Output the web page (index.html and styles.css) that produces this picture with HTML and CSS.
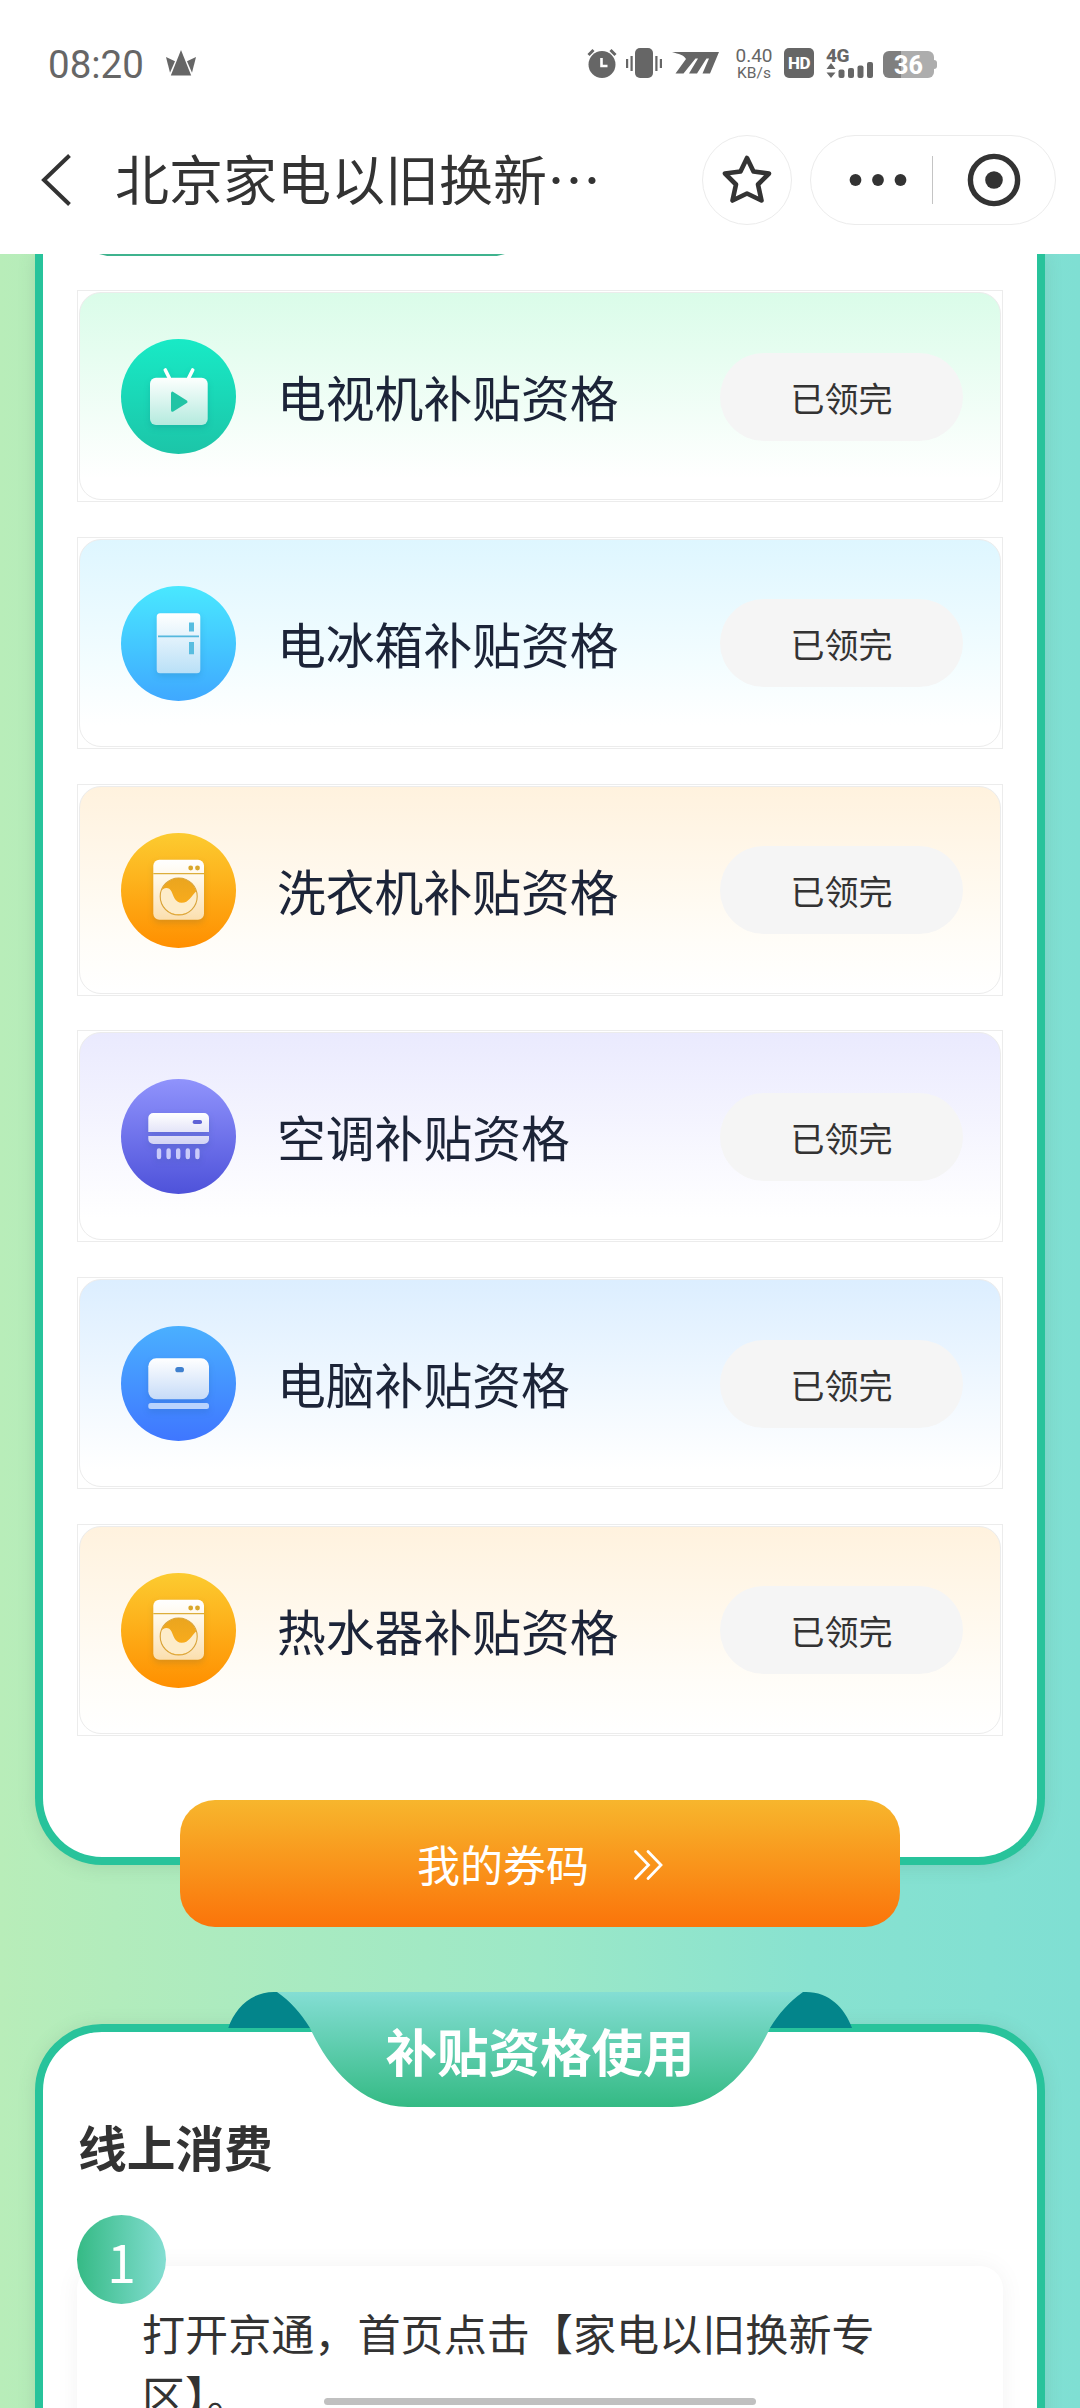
FILE: index.html
```html
<!DOCTYPE html>
<html lang="zh-CN">
<head>
<meta charset="utf-8">
<title>北京家电以旧换新</title>
<link rel="stylesheet" href="styles.css">
</head>
<body>
<svg class="defs" width="0" height="0">
  <defs>
    <linearGradient id="gTv" x1="0" y1="0" x2="0" y2="1"><stop offset="0" stop-color="#fdfffe"/><stop offset="1" stop-color="#b4eade"/></linearGradient>
    <linearGradient id="gFridge" x1="0" y1="0" x2="0" y2="1"><stop offset="0" stop-color="#ffffff"/><stop offset="1" stop-color="#b9e0f7"/></linearGradient>
    <linearGradient id="gWash" x1="0" y1="0" x2="0" y2="1"><stop offset="0" stop-color="#ffffff"/><stop offset=".3" stop-color="#fff8ea"/><stop offset="1" stop-color="#fbdfae"/></linearGradient>
    <linearGradient id="gHole" x1="0" y1="0" x2="0" y2="1"><stop offset="0" stop-color="#eaa51f"/><stop offset="1" stop-color="#ffae1a"/></linearGradient>
    <linearGradient id="gAc" x1="0" y1="0" x2="0" y2="1"><stop offset="0" stop-color="#ffffff"/><stop offset="1" stop-color="#d2d3f4"/></linearGradient>
    <linearGradient id="gPc" x1="0" y1="0" x2="0" y2="1"><stop offset="0" stop-color="#ffffff"/><stop offset="1" stop-color="#c6dbf8"/></linearGradient>
    <linearGradient id="gBanner" x1="0" y1="0" x2="0" y2="1"><stop offset="0" stop-color="#84ded4"/><stop offset="1" stop-color="#34ba84"/></linearGradient>
    <symbol id="washer" viewBox="0 0 115 115">
      <rect x="32.3" y="26.7" width="50.7" height="60" rx="6" fill="url(#gWash)"/>
      <path d="M32.3 40.6h50.7" stroke="#dcae3c" stroke-width="1.2"/>
      <circle cx="69.7" cy="35" r="2.4" fill="#d9a72b"/><circle cx="76.5" cy="35" r="2.4" fill="#d9a72b"/>
      <circle cx="57.7" cy="63.5" r="18.4" fill="url(#gHole)"/>
      <path d="M39.8 58.5C42 54.5 48 53 50.500 58.5C52.500 63 54 69.500 60.500 69.800C68 70 70 63 75.5 58C80 70 71 81.3 57.7 81.3C45 81.3 37.5 70 39.8 58.5Z" fill="#fdecc9"/>
      <circle cx="57.7" cy="63.5" r="18.5" fill="none" stroke="#d9a43a" stroke-width="1.1"/>
    </symbol>
  </defs>
</svg>

<header class="top">
  <div class="status">
    <span class="clock">08:20</span>
    <svg class="crown" width="30" height="26" viewBox="0 0 30 26" fill="#666"><path d="M15 0l10.200 25.500h-20.400z"/><path d="M0 7l9 4.200-5 11.500z"/><path d="M30 7l-9 4.200 5 11.500z"/></svg>
    <svg class="alarm" width="30" height="30" viewBox="0 0 30 30"><circle cx="15" cy="16.500" r="13.500" fill="#666"/><path d="M1.500 7l5-5M28.500 7l-5-5" stroke="#666" stroke-width="3"/><path d="M14.500 10v8h6" fill="none" stroke="#fff" stroke-width="2.600"/></svg>
    <svg class="vibrate" width="36" height="30" viewBox="0 0 36 30" fill="#666"><rect x="9" width="18" height="30" rx="5"/><rect x="4.500" y="8" width="2.200" height="15"/><rect y="11" width="2.200" height="9"/><rect x="29.300" y="8" width="2.200" height="15"/><rect x="33.800" y="11" width="2.200" height="9"/></svg>
    <svg class="brand" width="47" height="22" viewBox="0 0 47 22" fill="#666"><path d="M0 0H47L38 21.500H30.500L37 6.500H34.500L25 21.500H17L26 6.500H23.500L11.500 21.500H3.500L14 7C12 3 7 2 0 0Z"/></svg>
    <span class="rate"><span class="rate-num">0.40</span><span class="rate-unit">KB/s</span></span>
    <span class="hd">HD</span>
    <span class="cell">
      <span class="net">4G</span>
      <svg width="48" height="17" viewBox="0 0 48 17" fill="#666"><path d="M5 1l4.500 6h-9zM5 16l4.500-5.500h-9z"/><rect x="12.500" y="7.500" width="6" height="8.500" rx="2"/><rect x="22" y="6" width="6" height="10" rx="2"/><rect x="31.500" y="3.500" width="6" height="12.500" rx="2"/><rect x="41" y="0" width="6" height="16" rx="2"/></svg>
    </span>
    <span class="battery">36</span><span class="nub"></span>
  </div>
  <nav class="nav">
    <svg class="back" width="30" height="52" viewBox="0 0 30 52"><path d="M28.500 1.500L3 26L28.500 50.500" fill="none" stroke="#333" stroke-width="4"/></svg>
    <h1 class="title">北京家电以旧换新…</h1>
    <div class="fav"><svg width="52" height="52" viewBox="0 0 52 52"><path d="M26 4L32.500 17.500L48 19.500L37 30.500L40.500 46.500L26 39.500L11.500 46.500L15 30.500L4 19.500L19.500 17.500Z" fill="none" stroke="#333" stroke-width="4.600" stroke-linejoin="round"/></svg></div>
    <div class="capsule">
      <svg class="dots" width="58" height="14" viewBox="0 0 58 14" fill="#333"><circle cx="6.500" cy="7" r="5.900"/><circle cx="29" cy="7" r="5.900"/><circle cx="51.500" cy="7" r="5.900"/></svg>
      <span class="sep"></span>
      <svg class="target" width="54" height="54" viewBox="0 0 54 54"><circle cx="27" cy="27" r="23.600" fill="none" stroke="#333" stroke-width="5.400"/><circle cx="27" cy="27" r="8.800" fill="#333"/></svg>
    </div>
  </nav>
</header>

<main class="page">
  <section class="card quota">
    <div class="tab-edge"></div>
    <ul class="list">
      <li class="row"><div class="panel tv">
        <span class="badge"><svg width="115" height="115" viewBox="0 0 115 115"><path d="M44.300 31l4 8M71.700 31l-4 8" stroke="#fff" stroke-width="3.600" stroke-linecap="round"/><rect x="29" y="38.700" width="57.700" height="47.300" rx="6" fill="url(#gTv)"/><path d="M51.500 54.200v17l13.500-8.500z" fill="#22c4a5" stroke="#22c4a5" stroke-width="3" stroke-linejoin="round"/></svg></span>
        <span class="name">电视机补贴资格</span><span class="state">已领完</span></div></li>
      <li class="row"><div class="panel fridge">
        <span class="badge"><svg width="115" height="115" viewBox="0 0 115 115"><rect x="35.700" y="27.300" width="43.600" height="60" rx="3.500" fill="url(#gFridge)"/><path d="M37 50.300h41" stroke="#55b8dd" stroke-width="1.800"/><path d="M68 36.500h5v9h-5zM68 56h5v12.300h-5z" fill="#58bde0"/></svg></span>
        <span class="name">电冰箱补贴资格</span><span class="state">已领完</span></div></li>
      <li class="row"><div class="panel wash">
        <span class="badge"><svg width="115" height="115"><use href="#washer"/></svg></span>
        <span class="name">洗衣机补贴资格</span><span class="state">已领完</span></div></li>
      <li class="row"><div class="panel ac">
        <span class="badge"><svg width="115" height="115" viewBox="0 0 115 115"><path d="M27.300 53V39a5 5 0 0 1 5-5h50.700a5 5 0 0 1 5 5v14zM27.300 57h60.700v3a5 5 0 0 1-5 5H32.300a5 5 0 0 1-5-5z" fill="url(#gAc)"/><rect x="71.700" y="41" width="9.300" height="4" rx="1.800" fill="#5e62d6"/><path d="M38 71.500v6.500M47.600 71.500v6.500M57.200 71.500v6.500M66.800 71.500v6.500M76.400 71.500v6.500" stroke="#c9cbfa" stroke-width="4.400" stroke-linecap="round"/></svg></span>
        <span class="name">空调补贴资格</span><span class="state">已领完</span></div></li>
      <li class="row"><div class="panel pc">
        <span class="badge"><svg width="115" height="115" viewBox="0 0 115 115"><rect x="27.300" y="32.300" width="60.700" height="41" rx="8" fill="url(#gPc)"/><rect x="54.300" y="41" width="8.700" height="5.300" rx="2.650" fill="#3f80cf"/><rect x="27.300" y="77" width="60.700" height="6" rx="2.500" fill="#b9d3fd"/></svg></span>
        <span class="name">电脑补贴资格</span><span class="state">已领完</span></div></li>
      <li class="row"><div class="panel wash">
        <span class="badge"><svg width="115" height="115"><use href="#washer"/></svg></span>
        <span class="name">热水器补贴资格</span><span class="state">已领完</span></div></li>
    </ul>
  </section>

  <a class="coupons"><span class="coupons-text">我的券码</span><svg width="32" height="32" viewBox="0 0 32 32"><path d="M2.500 2.500L15.500 16L2.500 29.500M15 2.500L28 16L15 29.500" fill="none" stroke="#fff" stroke-width="2.800" stroke-linecap="round"/></svg></a>

  <section class="card usage">
    <div class="banner">
      <svg class="ribbon" width="624" height="115" viewBox="228 1992 624 115">
        <path d="M228.300 2028C235 2008 251 1992 274 1992H280L315 2028ZM852 2028C845 2008 829 1992 806 1992H800L765 2028Z" fill="#03858b"/>
        <path d="M277 1992H803C788 2003 780 2012 770 2028C754 2063 722 2107 672 2107H408C358 2107 326 2063 310 2028C300 2012 291 2002 277 1992Z" fill="url(#gBanner)"/>
      </svg>
      <h2 class="banner-text">补贴资格使用</h2>
    </div>
    <h3 class="sub">线上消费</h3>
    <div class="step">
      <span class="num">1</span>
      <p class="step-text">打开京通，首页点击【家电以旧换新专区】。</p>
    </div>
  </section>
</main>
<div class="home-bar"></div>
</body>
</html>
```
FILE: styles.css
```css
* { box-sizing: border-box; }

body {
  margin: 0;
  width: 1080px;
  height: 2408px;
  overflow: hidden;
  position: relative;
  background: #fff;
  color: #333;
  font-family: "Noto Sans CJK SC", sans-serif;
}

svg { display: block; flex: none; }
h1, h2, h3, p, ul { margin: 0; padding: 0; font-weight: 400; }
.defs { position: absolute; }

/* status bar and navigation */
.top { height: 254px; background: #fff; }

.status {
  display: flex;
  align-items: center;
  height: 126px;
  padding-left: 48px;
  color: #666;
  font-family: Roboto, sans-serif;
}
.clock { width: 118px; font-size: 38.500px; line-height: 44px; padding-top: 4px; }
.alarm { margin-left: 391px; }
.vibrate { margin-left: 9px; }
.brand { margin-left: 10px; }
.rate {
  display: flex;
  flex-direction: column;
  align-items: center;
  width: 42px;
  margin-left: 14px;
  white-space: nowrap;
}
.rate-num { font-size: 19px; line-height: 19px; }
.rate-unit { font-size: 15.500px; line-height: 16px; }
.hd {
  width: 30px;
  height: 30px;
  margin-left: 9px;
  border-radius: 5px;
  background: #666;
  color: #fff;
  font-size: 17px;
  font-weight: 800;
  line-height: 31px;
  text-align: center;
  letter-spacing: -.5px;
}
.cell { margin-left: 12px; height: 30px; width: 48px; }
.net { display: block; height: 14px; font-size: 19px; font-weight: 800; line-height: 15px; letter-spacing: -.5px; }
.battery {
  width: 51px;
  height: 27px;
  margin: 3px 0 0 9px;
  border-radius: 6px;
  background: linear-gradient(90deg, #7f7f7f 36%, #adadad 36%);
  color: #fff;
  font-size: 25px;
  font-weight: 800;
  line-height: 29px;
  text-align: center;
}
.nub { width: 3px; height: 9px; margin-top: 3px; border-radius: 0 3px 3px 0; background: #adadad; }

.nav { display: flex; align-items: center; height: 108px; padding-left: 41px; }
.title { width: 587px; padding: 0 0 4px 44px; font-size: 54px; line-height: 80px; white-space: nowrap; }
.fav, .capsule { display: flex; align-items: center; height: 90px; border: 1px solid #ececec; border-radius: 45px; }
.fav { width: 90px; margin-left: 44px; justify-content: center; }
.capsule { width: 246px; margin-left: 18px; padding-left: 38px; }
.sep { width: 1px; height: 48px; margin-left: 25px; background: #c4c4c4; }
.target { margin-left: 34px; }

/* page body */
.page {
  height: 2154px;
  padding: 0 35px;
  overflow: hidden;
  background: linear-gradient(90deg, #b8edb9, #9ce8c7 50%, #88e2d0 75%, #7fdfd3);
}
.card {
  border: 8px solid #28c39b;
  background: #fff;
  box-shadow: 0 2px 18px rgba(80, 110, 90, .16);
}
.quota {
  height: 1611px;
  padding: 0 34px;
  border-top: 0;
  border-radius: 0 0 67px 67px;
}
.tab-edge {
  width: 406px;
  height: 2px;
  margin-left: 22px;
  background: #3fb38e;
  clip-path: polygon(0 0, 100% 0, 98% 100%, 2% 100%);
}
.list { display: flex; flex-direction: column; gap: 34.800px; padding-top: 34px; list-style: none; }
.row { height: 212px; padding: 1px; border: 1px solid #ececec; }
.panel {
  display: flex;
  align-items: center;
  height: 208px;
  padding: 1px 37px 0 41px;
  border: 1px solid #ececec;
  border-radius: 22px;
}
.badge { width: 115px; height: 115px; border-radius: 50%; }
.badge svg { filter: drop-shadow(0 3px 3px rgba(0, 60, 90, .14)); }
.name { flex: 1; padding-left: 41px; color: #1c2438; font-size: 48.800px; line-height: 70px; padding-bottom: 1px; }
.state {
  width: 243px;
  height: 88px;
  border-radius: 44px;
  background: #f5f5f5;
  font-size: 34px;
  line-height: 89px;
  text-align: center;
}
.tv { background: linear-gradient(#dafce9, #fff 90%); }
.tv .badge { background: linear-gradient(#18eac6, #1cc5a8); }
.fridge { background: linear-gradient(#def6ff, #f3fdff 60%, #fff 90%); }
.fridge .badge { background: linear-gradient(#49e8ff, #3fa8ff); }
.wash { background: linear-gradient(#fff2de, #fffdf8 75%, #fff); }
.wash .badge { background: linear-gradient(#fccb30, #ff8f00); }
.ac { background: linear-gradient(#eaeafe, #fff 90%); }
.ac .badge { background: linear-gradient(#9093fc, #4e52da); }
.pc { background: linear-gradient(#dceeff, #fff 92%); }
.pc .badge { background: linear-gradient(#4ab0ff, #3f76ff); }

.coupons {
  display: flex;
  align-items: center;
  position: relative;
  width: 720px;
  height: 127px;
  margin: -65px auto 0;
  padding: 3px 0 0 237px;
  gap: 44px;
  border-radius: 35px;
  background: linear-gradient(#f7b62d, #fb740a);
  color: #fff;
  font-size: 43px;
}
.coupons-text { padding-bottom: 5px; }

.usage { height: 500px; margin-top: 97px; padding: 0 34px; border-radius: 67px 67px 0 0; }
.banner { position: relative; width: 624px; height: 115px; margin: -40px auto 0; }
.ribbon { position: absolute; left: 0; top: 0; }
.banner-text {
  position: relative;
  color: #fff;
  font-size: 51.500px;
  font-weight: 700;
  line-height: 115px;
  text-align: center;
}
.sub { margin-top: 3px; padding-left: 1px; font-size: 48.700px; font-weight: 700; line-height: 72px; }
.step {
  position: relative;
  height: 300px;
  margin-top: 84px;
  padding: 35px 65px 0;
  border-radius: 23px;
  background: #fff;
  box-shadow: 0 0 24px rgba(0, 0, 0, .05);
}
.num {
  position: absolute;
  left: 0;
  top: -51px;
  width: 89px;
  height: 89px;
  border-radius: 50%;
  background: linear-gradient(90deg, #35ba85, #84ded2);
  color: #fff;
  font-size: 51.500px;
  line-height: 91px;
  text-align: center;
}
.step-text { font-size: 43.100px; line-height: 62px; }
.home-bar {
  position: absolute;
  left: 324px;
  top: 2398px;
  width: 432px;
  height: 7px;
  border-radius: 4px;
  background: #c0c0c0;
}
```
